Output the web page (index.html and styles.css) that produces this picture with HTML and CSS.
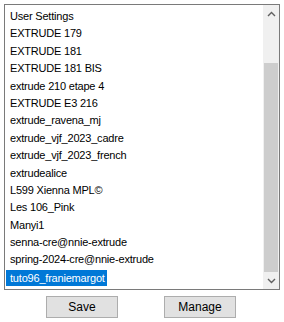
FILE: index.html
```html
<!DOCTYPE html>
<html lang="en">
  <head>
    <meta charset="UTF-8" />
    <title>User Settings</title>
    <link rel="stylesheet" href="styles.css">
  </head>
  <body>
    <div class="dialog">
      <div class="listbox">
        <ul class="items">
          <li>User Settings</li>
          <li>EXTRUDE 179</li>
          <li>EXTRUDE 181</li>
          <li>EXTRUDE 181 BIS</li>
          <li>extrude 210 etape 4</li>
          <li>EXTRUDE E3 216</li>
          <li>extrude_ravena_mj</li>
          <li>extrude_vjf_2023_cadre</li>
          <li>extrude_vjf_2023_french</li>
          <li>extrudealice</li>
          <li>L599 Xienna MPL&copy;</li>
          <li>Les 106_Pink</li>
          <li>Manyi1</li>
          <li>senna-cre@nnie-extrude</li>
          <li>spring-2024-cre@nnie-extrude</li>
          <li class="selected"><span>tuto96_franiemargot</span></li>
        </ul>
        <div class="scrollbar">
          <div class="arrow">
            <svg width="9" height="6" viewBox="0 0 9 6"><path d="M1 5 L4.5 1.5 L8 5" fill="none" stroke="#606060" stroke-width="1.4"/></svg>
          </div>
          <div class="track">
            <div class="thumb"></div>
          </div>
          <div class="arrow">
            <svg width="9" height="6" viewBox="0 0 9 6"><path d="M1 1 L4.5 4.5 L8 1" fill="none" stroke="#606060" stroke-width="1.4"/></svg>
          </div>
        </div>
      </div>
      <div class="buttons">
        <button class="btn">Save</button>
        <button class="btn">Manage</button>
      </div>
    </div>
  </body>
</html>
```

FILE: styles.css
```css
body {
  margin: 0;
  background: #ffffff;
  font-family: "Liberation Sans", Arial, sans-serif;
  font-size: 11px;
  color: #000000;
}
.dialog {
  padding: 4px 0 0 4px;
}
.listbox {
  display: flex;
  width: 276px;
  height: 286px;
  box-sizing: border-box;
  border: 1px solid #7a7a7a;
  background: #ffffff;
}
.items {
  flex: 1;
  list-style: none;
  margin: 0;
  padding: 3px 0 0 1px;
  letter-spacing: -0.2px;
}
.items li {
  height: 17.4px;
  line-height: 17.4px;
  padding-left: 4px;
  white-space: nowrap;
}
.items li.selected span {
  display: inline-block;
  line-height: 16px;
  margin-top: 1px;
  background: #0078d7;
  color: #ffffff;
  margin-left: -4px;
  padding: 0 2px 0 4px;
}
.scrollbar {
  width: 16px;
  display: flex;
  flex-direction: column;
  background: #f0f0f0;
}
.arrow {
  height: 17px;
  display: flex;
  align-items: center;
  justify-content: center;
}
.track {
  flex: 1;
  display: flex;
  flex-direction: column;
  padding-top: 41px;
}
.thumb {
  flex: 1;
  margin: 0 1px;
  background: #cdcdcd;
}
.buttons {
  display: flex;
  gap: 46px;
  padding: 6px 0 0 42px;
}
.btn {
  width: 72px;
  height: 22px;
  font-family: "Liberation Sans", Arial, sans-serif;
  font-size: 12px;
  color: #000000;
  background: #e1e1e1;
  border: 1px solid #adadad;
  padding: 0;
}
```
